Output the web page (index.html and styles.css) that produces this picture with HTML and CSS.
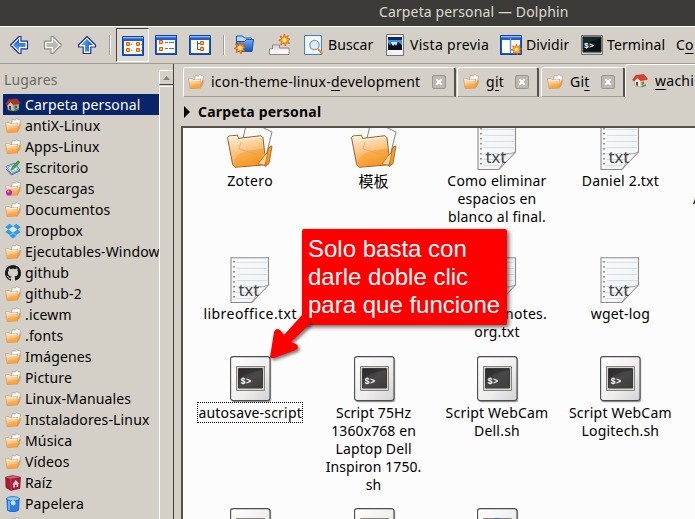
FILE: index.html
```html
<!DOCTYPE html>
<html lang="es">
<head>
<meta charset="utf-8">
<title>Carpeta personal — Dolphin</title>
<link rel="stylesheet" href="styles.css">
</head>
<body>
<svg class="defs" width="0" height="0" aria-hidden="true">
  <defs>
    <linearGradient id="blue" x2="0" y2="1"><stop stop-color="#0c55d8"/><stop offset="1" stop-color="#62b4f8"/></linearGradient>
    <linearGradient id="bar" x2="0" y2="1"><stop stop-color="#76aef4"/><stop offset="1" stop-color="#1350c8"/></linearGradient>
    <linearGradient id="orange" x2=".3" y2="1"><stop stop-color="#fff3e2"/><stop offset=".5" stop-color="#fdc98c"/><stop offset="1" stop-color="#f9a03c"/></linearGradient>
    <linearGradient id="deep" x2="1" y2="1"><stop stop-color="#fdb04e"/><stop offset="1" stop-color="#f08c0a"/></linearGradient>
    <linearGradient id="page" x2="1" y2="1"><stop stop-color="#fafafa"/><stop offset="1" stop-color="#f2f2f2"/></linearGradient>
    <linearGradient id="plate" x2="1" y2="1"><stop stop-color="#ffffff"/><stop offset=".6" stop-color="#ededed"/><stop offset="1" stop-color="#d2d2d2"/></linearGradient>
    <linearGradient id="screen" x2="1" y2="1"><stop stop-color="#2c2c2c"/><stop offset=".5" stop-color="#494949"/><stop offset="1" stop-color="#3c3c3c"/></linearGradient>
    <linearGradient id="curl" x2="1" y2="1"><stop stop-color="#fff"/><stop offset=".5" stop-color="#f4f4f4"/><stop offset="1" stop-color="#8a8a8a"/></linearGradient>
    <symbol id="arrow" viewBox="0 0 20 20">
      <path d="M1.5 10 10 1.5h2v4.700h6.500v7.600H12v4.700h-2Z" fill="#fff" stroke="var(--edge)" stroke-width="1.2" stroke-linejoin="round"/>
      <path d="M4 10 10 4v4h6.500v4H10v4Z" fill="var(--core)"/>
    </symbol>
    <symbol id="spark" viewBox="0 0 12 12">
      <path d="m6 0 1 3.500L9.800 1.500 8.800 4.600 12 5.200 9 6.600l2 3-3.200-1L7 12 5.300 8.900 2.200 10.800 3.300 7.500 0 6.400 3.200 5 1.500 2 4.800 3.400Z" fill="#ffb71d" stroke="#d9480c" stroke-width=".7"/>
      <circle cx="6" cy="6" r="1.700" fill="#fff6a8"/>
    </symbol>
    <symbol id="window" viewBox="0 0 22 20">
      <path d="M.5.5h21v19H.5Z" fill="#1d5ecf" stroke="#1240a0"/>
      <path d="M1 1h20v3H1Z" fill="url(#bar)"/><path d="M1 1h20v1H1Z" fill="#8dbcf5"/>
      <path d="M2 5h18v13H2Z" fill="#fbfbf8"/>
    </symbol>
    <symbol id="dot" viewBox="0 0 4 4"><path d="M.5.5h3v3h-3Z" fill="#ffc02b" stroke="#e4581f" stroke-width="1"/></symbol>
    <symbol id="close" viewBox="0 0 14 14">
      <rect x=".5" y=".5" width="13" height="13" rx="1.500" fill="#bcb9b2" stroke="#99968f"/>
      <path d="m4.300 4.300 5.400 5.400m0-5.400L4.300 9.700" stroke="#fff" stroke-width="2"/>
    </symbol>
    <symbol id="mini-folder" viewBox="0 0 16 16">
      <path d="m6.500 6 .9-4.600 3 .8L11.300.6l4.200 1.700-1.800 9L9 10Z" fill="#fff" stroke="#99958d" stroke-width=".6"/>
      <path d="m12.300 13.800 2.500-3.500.7-4-1.600 1.500Z" fill="#f5a13c" stroke="#d08a3a" stroke-width=".5"/>
      <path d="M.5 4.700h3.800l1 1.200 7.700-.4-.4 8.600-10.500.5Z" fill="url(#orange)" stroke="#cf9150" stroke-width=".6"/>
      <path d="M2.200 14.200c.4-4.500 4-3.600 10.500-4.500l-.4 4.100Z" fill="#fba440" opacity=".6"/>
      <path d="M1.200 5.500H4l1 1.100 7-.3" stroke="#fff" stroke-width=".7" fill="none"/>
    </symbol>
    <symbol id="home" viewBox="0 0 16 16">
      <path d="M2 7 5 4l4 4v6l-6-1Z" fill="#f5efe6" stroke="#8f8a87" stroke-width=".5"/>
      <path d="m8 7 6-1v6l-5 2Z" fill="#e9cd91"/>
      <path d="m.5 7 3.300-4.700L12 1.500l3.700 4.800-7.200 1.500-3-3-3 3.200Z" fill="#df3f32" stroke="#b02a20" stroke-width=".5"/>
      <path d="M4 9h2v4L4 12.600Z" fill="#6d4d39"/><path d="m9.500 9 2.500-.5v2.800l-2.500.6Z" fill="#4285c4"/><path d="m9 13 5-2v2l-4 1.500Z" fill="#57a343"/>
    </symbol>
    <symbol id="desk" viewBox="0 0 16 16">
      <path d="M1 6.500 9.500 3l5.500 7-8.700 4Z" fill="#dceafe" stroke="#3564a0" stroke-width=".8"/>
      <path d="m3 7 6-2.300 3.800 5L7 12Z" fill="#fff" stroke="#5995d5" stroke-width=".7"/>
      <path d="m6 10 1.200-3L13 .8l1.800 1.400L9 8.800Z" fill="#35ac4f" stroke="#19713a" stroke-width=".6"/>
      <path d="m1 9 5.300 6 8.700-4" fill="none" stroke="#50779d"/>
    </symbol>
    <symbol id="dropbox" viewBox="0 0 16 16">
      <path d="M4.800.8.3 3.900 3.500 6.400 8 3.400ZM11.200.8l4.500 3.100-3.200 2.500L8 3.400ZM.3 9.100l4.500 2.900L8 9.500 3.500 6.400ZM15.700 9.100 11.200 12 8 9.500l4.500-3.100ZM3.700 12.300 8 15.400l4.300-3.100-1.100.5L8 10.300l-3.200 2.500Z" fill="#2e9ae9"/>
      <path d="M8 3.400 3.500 6.400 8 9.500l4.500-3.100Z" fill="#d3ecff"/>
    </symbol>
    <symbol id="octocat" viewBox="0 0 16 16">
      <path fill="#181818" d="M8 0C3.580 0 0 3.580 0 8c0 3.540 2.290 6.530 5.470 7.590.4.07.55-.17.55-.38 0-.19-.01-.82-.01-1.490-2.010.37-2.530-.49-2.690-.94-.09-.23-.48-.94-.82-1.130-.28-.15-.68-.52-.01-.53.63-.01 1.080.58 1.230.82.72 1.210 1.870.87 2.330.66.07-.52.28-.87.51-1.070-1.780-.2-3.640-.89-3.640-3.950 0-.87.31-1.590.82-2.150-.08-.2-.36-1.020.08-2.120 0 0 .67-.21 2.200.82.64-.18 1.320-.27 2-.27s1.360.09 2 .27c1.530-1.040 2.200-.82 2.200-.82.44 1.100.16 1.920.08 2.120.51.56.82 1.270.82 2.150 0 3.070-1.870 3.750-3.650 3.950.29.25.54.73.54 1.480 0 1.070-.01 1.930-.01 2.200 0 .21.15.46.55.38A8 8 0 0 0 16 8c0-4.420-3.580-8-8-8Z"/>
    </symbol>
    <symbol id="root" viewBox="0 0 16 16">
      <path d="m.5 2.200 7-1.700 8 1.700-.7 11.300L6 15.500l-5-2.800Z" fill="#a71939" stroke="#7c1029" stroke-width=".6"/>
      <path d="m.8 2.500 5 1.200 9.500-1.300-7.800-1.600Z" fill="#d65a70"/><path d="m5.800 3.800.3 11.400" stroke="#d04662" stroke-width=".7"/>
      <path d="m10.700 5 3.600 3.400h-1l-.2 3.300-1.600.4V9.700H10v2.800l-1.700.3V9.500h-1Z" fill="#f3cad2"/>
    </symbol>
    <symbol id="bin" viewBox="0 0 16 16">
      <path d="M1.800 2.600 2.500 14.300c2.500 1.900 8.500 1.900 11 0l.7-11.700Z" fill="#287fea" stroke="#104fae" stroke-width=".7"/>
      <path d="M4 5v8.800" stroke="#83c6ff" stroke-width="1.400"/>
      <ellipse cx="8" cy="2.800" rx="6.200" ry="2.200" fill="#8bc9fa" stroke="#1458ba" stroke-width=".7"/>
      <path d="m5.500 5.800 2-1.500 2.700 1 .5 2.800-2 1.400-2.500-1Z" fill="#c4e5ff"/>
    </symbol>
    <symbol id="folder" viewBox="0 0 48 48">
      <path d="m17 14 4.500-18L46 8 39 36 20 32Z" fill="#fafafa" stroke="#777" stroke-width=".9"/>
      <path d="m38 41 5-18 3-1-3 17.500-4 3Z" fill="url(#deep)" stroke="#a25b0a" stroke-width=".8"/>
      <path d="M1.500 13.500 3 12l8.500-.8 1 3.200 22.500-2.700 2 2 3 27-30.800 2.600-2.500-2.500Z" fill="url(#orange)" stroke="#98612b" stroke-width="1"/>
      <path d="M8 42.500C7 32 12 26 38 25l1.500 15-29 2.800Z" fill="url(#deep)" opacity=".7"/>
      <path d="m15 18-2 7 24 7" fill="none" stroke="#d5a66e" stroke-width=".7"/>
      <path d="m32 40 8-10.500 1.500.8L39 41Z" fill="#ffd29b" stroke="#b06b1d" stroke-width=".7"/>
      <path d="m2.600 15 1.200-2 6.700-.6 1 3.500 23.500-2.700" fill="none" stroke="#fff8e8" stroke-width="1"/>
    </symbol>
    <symbol id="text-file" viewBox="0 0 48 48">
      <path d="M5 .8h37.500v27L25.800 45.500H5Z" fill="url(#page)" stroke="#8b8b8b" stroke-width="1.100"/>
      <path d="M10.500 5.500H41m-30.500 6H41m-30.500 6H41m-30.500 6H41m-30.500 6H38M10.500 35.500H34M10.500 41.500H26" stroke="#c9e2ed" stroke-width="1"/>
      <path d="M8 4v40" stroke="#777" stroke-width="1.600" stroke-dasharray="1.600 3.400"/>
      <path d="M42.300 28C36 31 32 29.500 31 30c-.5 2 1 8-5 15.300Z" fill="url(#curl)" stroke="#929292" stroke-width=".8"/>
      <text x="12.500" y="39" class="txt-mark">txt</text>
    </symbol>
    <symbol id="script-file" viewBox="0 0 48 48">
      <rect x="5.800" y="1.600" width="39.400" height="44.600" rx="2.500" fill="#777" opacity=".65"/>
      <rect x="4.600" y=".6" width="39.400" height="44" rx="2.500" fill="url(#plate)" stroke="#4c4c4c" stroke-width="1.100"/>
      <path d="M10.500 10.500h28v24h-28Z" fill="#d9d5c8" stroke="#85837b"/>
      <path d="M12.500 12.500h24v19.500h-24Z" fill="url(#screen)" stroke="#3a3a38"/>
      <path d="M13 23C20 17 28 15 36 14.500V13H13Z" fill="#2b2b2b" opacity=".6"/>
      <text x="14.500" y="27.500" class="prompt">$&gt;</text>
    </symbol>
  </defs>
</svg>

<header class="titlebar"><span>Carpeta personal — Dolphin</span></header>

<nav class="toolbar">
  <svg class="i20 nav-back"><use href="#arrow"/></svg>
  <svg class="i20 nav-next"><use href="#arrow"/></svg>
  <svg class="i20 nav-up"><use href="#arrow"/></svg>
  <i class="sep"></i>
  <span class="pressed"><svg width="22" height="20" viewBox="0 0 22 20"><use href="#window" width="22" height="20"/><use href="#dot" x="4" y="6" width="4" height="4"/><use href="#dot" x="14" y="6" width="4" height="4"/><use href="#dot" x="4" y="12" width="4" height="4"/><use href="#dot" x="14" y="12" width="4" height="4"/><path d="M9 8.500h1m9 0h1M9 14.500h1m9 0h1" stroke="#888"/></svg></span>
  <svg width="22" height="20" viewBox="0 0 22 20"><use href="#window" width="22" height="20"/><use href="#dot" x="4" y="5" width="4" height="4"/><use href="#dot" x="4" y="12" width="4" height="4"/><path d="M10 7.500h3m1 0h5m-9 6h3m1 0h5" stroke="#777"/></svg>
  <svg width="22" height="20" viewBox="0 0 22 20"><use href="#window" width="22" height="20"/><path d="M8.500 6v8.500H12M8.500 8.500H12" stroke="#555" fill="none"/><use href="#dot" x="11" y="6" width="4" height="4"/><use href="#dot" x="11" y="12" width="4" height="4"/></svg>
  <i class="sep"></i>
  <svg width="20" height="20" viewBox="0 0 20 20"><path d="M2.500 4V1h6l2 2h7v10h-15Z" fill="#b9d8fb" stroke="#1552b5"/><path d="M2.500 6.500h8l2-2h7l-1.500 12H3Z" fill="url(#bar)" stroke="#1653b5"/><use href="#spark" x="0" y="7" width="12" height="12"/></svg>
  <svg width="21" height="22" viewBox="0 0 21 22"><path d="M3.500 15v-4h7v3h9.500v6.500H.5V15Z" fill="#ddd" stroke="#8b8984"/><path d="M1 15.500h18.500v4.500H1Z" fill="#f8f8f8"/><use href="#spark" x="9.500" y="0" width="12" height="12"/></svg>
  <svg width="20" height="20" viewBox="0 0 20 20"><path d="M.5.5h17v19H.5Z" fill="#e5effa" stroke="#4b81bd"/><path d="M2 2h14v16H2Z" fill="#f5f9fd"/><circle cx="10.500" cy="10" r="4.700" fill="#dcebfa" stroke="#8f99a6" stroke-width="1.300"/><path d="m14 14 4.500 5" stroke="#e88d2f" stroke-width="2.200"/></svg>
  <span class="label">Buscar</span>
  <svg width="18" height="22" viewBox="0 0 18 22"><path d="M.5.5h17v21H.5Z" fill="#f3f3f2" stroke="#717171"/><path d="M2 3h14v13H2Z" fill="#0c285b"/><path d="M2 6h14v7H2Z" fill="#3b92ec"/><path d="M5 8h6v5H5Z" fill="#c9ecff"/><path d="M2 12V9l2 2 1-2 2 3 2-2 1 2 2-4 4 3v5H2Z" fill="#07101b"/></svg>
  <span class="label wide">Vista previa</span>
  <svg width="22" height="20" viewBox="0 0 22 20"><use href="#window" width="22" height="20"/><path d="M10.500 3v15" stroke="#6594da" stroke-width="1.500"/><use href="#spark" x="11" y="9" width="11" height="11"/></svg>
  <span class="label">Dividir</span>
  <svg width="22" height="20" viewBox="0 0 22 20"><path d="M.5.5h21v19H.5Z" fill="#cfcdc5" stroke="#77756f"/><path d="M2 2h18v15H2Z" fill="#142b2e" stroke="#222"/><path d="M3 9 20 3v13H3Z" fill="#071516"/><text x="3" y="13" class="term">$&gt;</text></svg>
  <span class="label">Terminal</span>
  <span class="label">C<u>o</u></span>
</nav>

<div class="main">
  <aside class="places">
    <div class="list">
      <h2>Lugares</h2>
      <ul>
        <li class="on"><svg><use href="#home"/></svg><span>Carpeta personal</span></li>
        <li><svg><use href="#mini-folder"/></svg><span>antiX-Linux</span></li>
        <li><svg><use href="#mini-folder"/></svg><span>Apps-Linux</span></li>
        <li><svg><use href="#desk"/></svg><span>Escritorio</span></li>
        <li><svg viewBox="0 0 16 16"><use href="#mini-folder"/><circle cx="4" cy="11.500" r="3" fill="#b92ab1"/><circle cx="3.300" cy="10.500" r="1" fill="#f0a2e8"/></svg><span>Descargas</span></li>
        <li><svg><use href="#mini-folder"/></svg><span>Documentos</span></li>
        <li><svg><use href="#dropbox"/></svg><span>Dropbox</span></li>
        <li><svg><use href="#mini-folder"/></svg><span>Ejecutables-Window</span></li>
        <li><svg><use href="#octocat"/></svg><span>github</span></li>
        <li><svg><use href="#mini-folder"/></svg><span>github-2</span></li>
        <li><svg><use href="#mini-folder"/></svg><span>.icewm</span></li>
        <li><svg><use href="#mini-folder"/></svg><span>.fonts</span></li>
        <li><svg><use href="#mini-folder"/></svg><span>Imágenes</span></li>
        <li><svg><use href="#mini-folder"/></svg><span>Picture</span></li>
        <li><svg><use href="#mini-folder"/></svg><span>Linux-Manuales</span></li>
        <li><svg><use href="#mini-folder"/></svg><span>Instaladores-Linux</span></li>
        <li><svg><use href="#mini-folder"/></svg><span>Música</span></li>
        <li><svg><use href="#mini-folder"/></svg><span>Vídeos</span></li>
        <li><svg><use href="#root"/></svg><span>Raíz</span></li>
        <li><svg><use href="#bin"/></svg><span>Papelera</span></li>
        <li><svg><use href="#mini-folder"/></svg></li>
      </ul>
    </div>
    <div class="scroll"><div class="up"><svg width="7" height="4" viewBox="0 0 7 4"><path d="M0 4 3.500 0 7 4Z" fill="#85827b"/></svg></div><div class="thumb"></div></div>
  </aside>

  <section class="content">
    <div class="tabs">
      <div class="tab tab-a"><svg><use href="#mini-folder"/></svg><span>icon-theme-linux-<u>d</u>evelopment</span><svg class="x"><use href="#close"/></svg></div>
      <div class="tab tab-b"><svg><use href="#mini-folder"/></svg><span>g<u>i</u>t</span><svg class="x"><use href="#close"/></svg></div>
      <div class="tab tab-c"><svg><use href="#mini-folder"/></svg><span>Gi<u>t</u></span><svg class="x"><use href="#close"/></svg></div>
      <div class="tab current"><svg><use href="#home"/></svg><span><u>w</u>achi</span></div>
    </div>
    <div class="crumb"><svg width="6" height="12" viewBox="0 0 6 12"><path d="M0 0 6 6 0 12Z"/></svg><span>Carpeta personal</span></div>
    <div class="view">
      <div class="files">
        <figure><svg><use href="#folder"/></svg><figcaption class="open">Zotero</figcaption></figure>
        <figure><svg><use href="#folder"/></svg><figcaption class="cjk">模板</figcaption></figure>
        <figure><svg><use href="#text-file"/></svg><figcaption>Como eliminar<br>espacios en<br>blanco al final.</figcaption></figure>
        <figure><svg><use href="#text-file"/></svg><figcaption>Daniel 2.txt</figcaption></figure>
        <figure class="edge"><figcaption><br>A</figcaption></figure>

        <figure><svg><use href="#text-file"/></svg><figcaption class="open">libreoffice.txt</figcaption></figure>
        <figure></figure>
        <figure><svg><use href="#text-file"/></svg><figcaption><span class="tail">notes.</span><br>org.txt</figcaption></figure>
        <figure><svg><use href="#text-file"/></svg><figcaption>wget-log</figcaption></figure>
        <figure></figure>

        <figure><svg><use href="#script-file"/></svg><figcaption><span class="focus">autosave-script</span></figcaption></figure>
        <figure><svg><use href="#script-file"/></svg><figcaption class="tight">Script 75Hz<br>1360x768 en<br>Laptop Dell<br>Inspiron 1750.<br>sh</figcaption></figure>
        <figure><svg><use href="#script-file"/></svg><figcaption>Script WebCam<br>Dell.sh</figcaption></figure>
        <figure><svg><use href="#script-file"/></svg><figcaption>Script WebCam<br>Logitech.sh</figcaption></figure>
        <figure></figure>

        <figure><svg><use href="#script-file"/></svg></figure>
        <figure><svg><use href="#script-file"/></svg></figure>
        <figure><svg viewBox="0 0 48 48"><use href="#script-file"/><circle cx="24" cy="17" r="7" fill="#3c66c8"/></svg></figure>
      </div>
    </div>
  </section>
</div>

<div class="callout">Solo basta con<br>darle doble clic<br>para que funcione
  <svg class="pointer" width="44" height="50" viewBox="0 0 44 50"><path d="M4 43 8 18q2-5 6-2l4 5L36 1l9 8-20 19 5 2q4 3 0 6L8 44q-4 1-4-1Z" fill="#f00"/></svg>
</div>
</body>
</html>
```
FILE: styles.css
```css
* { box-sizing: border-box; }
body {
  margin: 0;
  width: 695px;
  height: 519px;
  overflow: hidden;
  position: relative;
  display: flex;
  flex-direction: column;
  background: #d4d0c8;
  color: #000;
  font: 14px/18px "Noto Sans", "Noto Sans CJK SC", sans-serif;
  letter-spacing: .1px;
}
svg { display: block; flex: none; }
.defs { position: absolute; }
u { text-decoration: underline; text-decoration-thickness: 1px; text-underline-offset: 3px; text-decoration-skip-ink: none; }

.titlebar {
  height: 26px;
  flex: none;
  background: #3c3b37;
  color: #dfdbd2;
  padding: 3px 0 0 379px;
  letter-spacing: .13px;
  white-space: nowrap;
}

.toolbar {
  flex: none;
  height: 38px;
  display: grid;
  grid-template-columns: 34px 34px 32px 7px 39px 34px 34px 11px 35px 35px 24px 58px 24px 90px 26px 55px 26px 69px 30px;
  align-items: center;
  padding-left: 9px;
  border-top: 1px solid #fff;
  border-bottom: 1px solid #a29d94;
  overflow: hidden;
}
.i20 { width: 20px; height: 20px; }
.nav-back, .nav-up { --edge: #20309a; --core: url(#blue); }
.nav-next { --edge: #8d8b85; --core: #bdbab3; transform: scaleX(-1); }
.nav-up { transform: rotate(90deg); }
.sep { width: 2px; height: 20px; border-left: 1px solid #a29d94; border-right: 1px solid #fff; }
.pressed {
  width: 33px;
  height: 34px;
  padding: 7px 0 0 5px;
  background: #dedbd5;
  border: 1px solid #fff;
  border-top-color: #45423c;
  border-left-color: #45423c;
}
.label { white-space: nowrap; }
.label.wide { letter-spacing: .3px; }

.main { flex: 1; display: flex; min-height: 0; }
.places { width: 174px; display: flex; flex: none; border-right: 1px solid #45423c; }
.list { width: 160px; padding-top: 7px; overflow: hidden; letter-spacing: .15px; }
.list h2 { margin: 0 0 5px 4px; font-weight: 400; font-size: 14px; line-height: 18px; color: #6b6963; }
.list ul { margin: 0 0 0 3px; padding: 0; list-style: none; }
.list li { height: 21px; width: 156px; display: flex; align-items: center; gap: 4px; padding-left: 2px; white-space: nowrap; overflow: hidden; }
.list li svg { width: 16px; height: 16px; }
.list .on { background: #0a246a; color: #fff; }
.list .on svg { filter: brightness(.8) saturate(.85); }
.scroll { width: 14px; padding-top: 6px; display: flex; flex-direction: column; }
.up { height: 15px; display: grid; place-items: center; border: 1px solid #fff; border-right: 0; border-bottom-color: #45423c; }
.thumb { flex: 1; margin-top: 1px; border-left: 1px solid #fff; border-top: 1px solid #fff; }

.content { flex: 1; min-width: 0; padding-left: 7px; display: flex; flex-direction: column; }
.tabs { height: 33px; flex: none; display: flex; align-items: flex-end; overflow: hidden; letter-spacing: .26px; }
.tab {
  height: 30px;
  flex: none;
  display: flex;
  align-items: center;
  padding-left: 4px;
  border: 1px solid #fff;
  border-right: 2px solid #55514a;
  border-bottom: 1px solid #a29d94;
  border-radius: 3px 3px 0 0;
  white-space: nowrap;
}
.tab svg { width: 16px; height: 16px; margin-right: 7px; }
.tab-a { width: 273px; margin-left: 2px; }
.tab-b { width: 82px; margin-left: 1px; padding-left: 5px; }
.tab-c { width: 84px; margin-left: 2px; padding-left: 5px; }
.tab.current { width: 90px; height: 33px; border-bottom: 0; padding-left: 6px; }
.tab svg.x { width: 14px; height: 14px; margin: 0 8px 0 auto; }
.crumb { height: 29px; flex: none; display: flex; align-items: center; gap: 8px; padding-left: 3px; font-weight: 700; letter-spacing: .22px; }
.view { flex: 1; min-height: 0; overflow: hidden; background: #fcfcfc; border-top: 2px solid #55514a; border-left: 2px solid #55514a; }
.files {
  display: grid;
  grid-template-columns: repeat(5, 123.4px);
  grid-template-rows: 133px 99px 152px 48px;
  margin: -4px 0 0 5.5px;
  width: 617px;
  letter-spacing: .2px;
}
figure { margin: 0; }
figure svg { width: 48px; height: 48px; margin: 0 auto; }
figcaption { text-align: center; white-space: nowrap; }
figcaption.open { letter-spacing: .45px; }
figcaption.tight { letter-spacing: .1px; }
.cjk { font-size: 15px; }
.edge { padding: 48px 0 0 11px; }
.edge figcaption { text-align: left; }
.tail { padding-left: 58px; }
.focus { outline: 1px dotted #000; }
.txt-mark { font: 16.5px "Noto Sans", sans-serif; letter-spacing: 0; fill: #444; }
.prompt { font: 700 8.5px "Liberation Mono", monospace; letter-spacing: .3px; fill: #fff; }
.term { font: 700 8px "Liberation Mono", monospace; fill: #fff; }

.callout {
  position: absolute;
  left: 302px;
  top: 229px;
  width: 205px;
  height: 96px;
  padding: 6px 0 0 6px;
  background: #f00;
  color: #fff;
  font: 24px/28px "Liberation Sans", sans-serif;
  letter-spacing: 0;
  white-space: nowrap;
  border-radius: 2px;
  box-shadow: 2px 2px 4px rgba(0, 0, 0, .6);
}
.pointer { position: absolute; left: -36px; top: 85px; filter: drop-shadow(2px 2px 1.5px rgba(0, 0, 0, .5)); }
```
